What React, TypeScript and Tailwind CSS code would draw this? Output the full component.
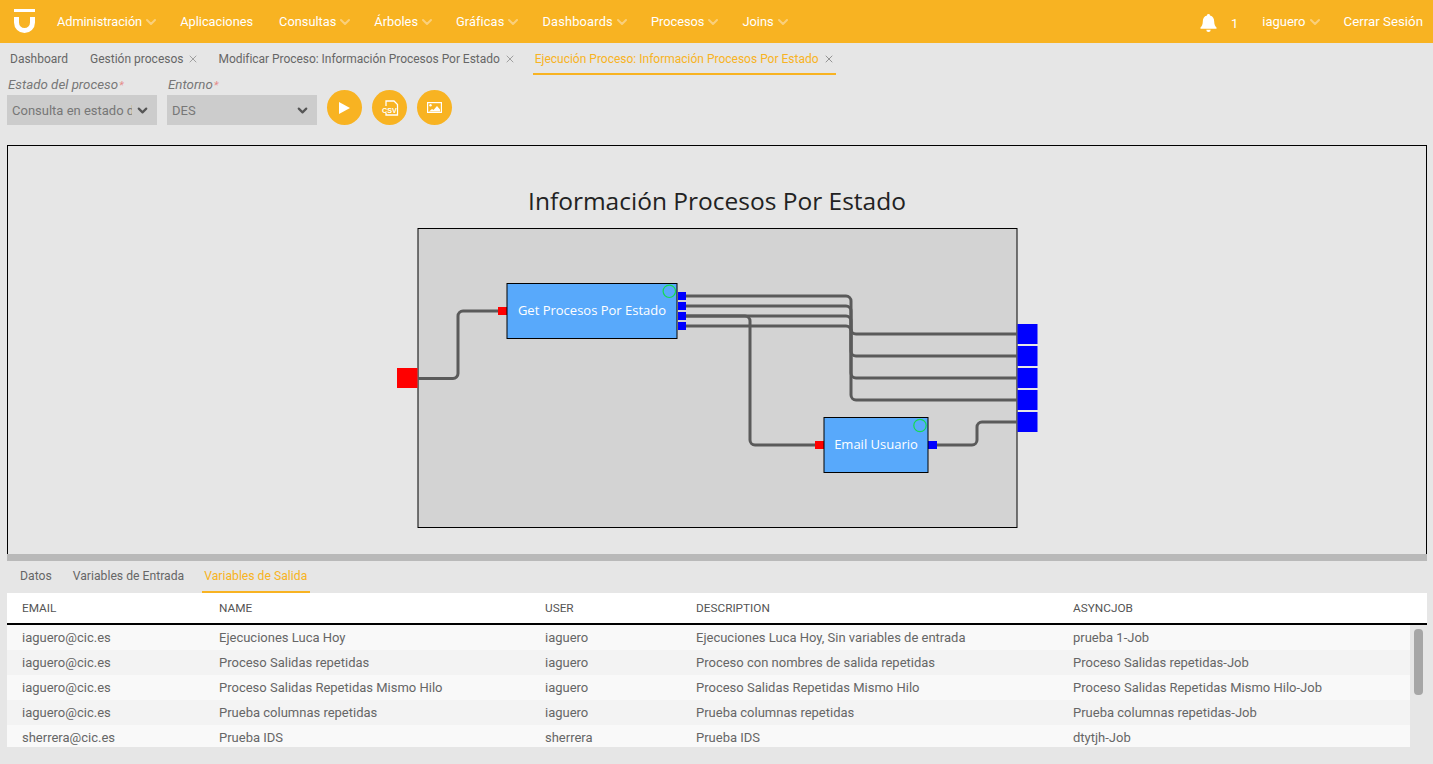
import { ChevronDown, X } from "lucide-react";

const navItems = [
  { label: "Administración", caret: true, cls: "tracking-[-0.07px]" },
  { label: "Aplicaciones", caret: false, cls: "" },
  { label: "Consultas", caret: true, cls: "" },
  { label: "Árboles", caret: true, cls: "" },
  { label: "Gráficas", caret: true, cls: "tracking-[0.1px]" },
  { label: "Dashboards", caret: true, cls: "tracking-[0.2px]" },
  { label: "Procesos", caret: true, cls: "" },
  { label: "Joins", caret: true, cls: "" },
];

const rows = [
  ["iaguero@cic.es", "Ejecuciones Luca Hoy", "iaguero", "Ejecuciones Luca Hoy, Sin variables de entrada", "prueba 1-Job"],
  ["iaguero@cic.es", "Proceso Salidas repetidas", "iaguero", "Proceso con nombres de salida repetidas", "Proceso Salidas repetidas-Job"],
  ["iaguero@cic.es", "Proceso Salidas Repetidas Mismo Hilo", "iaguero", "Proceso Salidas Repetidas Mismo Hilo", "Proceso Salidas Repetidas Mismo Hilo-Job"],
  ["iaguero@cic.es", "Prueba columnas repetidas", "iaguero", "Prueba columnas repetidas", "Prueba columnas repetidas-Job"],
  ["sherrera@cic.es", "Prueba IDS", "sherrera", "Prueba IDS", "dtytjh-Job"],
];

const Logo = () => (
  <svg width="21" height="24" viewBox="0 0 21 24" fill="none" className="ml-[14px] mr-[22px] mb-[1px]">
    <rect x="0" y="0" width="21" height="3" fill="#fff" />
    <path d="M2.5 8v5.5a8 8 0 0 0 16 0V8" stroke="#fff" strokeWidth="5" />
  </svg>
);

const Bell = () => (
  <svg width="17" height="18" viewBox="0 0 17 18" fill="#fff" className="mt-[3px]">
    <path d="M8.5 0a1.5 1.5 0 0 1 1.5 1.6c3 .7 4.2 3.1 4.2 6 0 3.2 1 4.6 2.3 6v1.2H.5v-1.2c1.3-1.4 2.3-2.8 2.3-6 0-2.9 1.2-5.3 4.2-6A1.5 1.5 0 0 1 8.5 0z" />
    <path d="M6.3 15.8h4.4a2.2 2.2 0 0 1-4.4 0z" />
  </svg>
);

const Caret = () => <ChevronDown size={16} strokeWidth={3} className="ml-[1px] -mr-[5px] text-[#fad07c]" />;

const Select = ({ label, value, clip }: { label: string; value: string; clip?: boolean }) => (
  <div className="w-[150px]">
    <div className="h-5 pl-[1px] text-[13.3px] leading-[19px] italic text-[#777]">
      {label}
      <span className="text-[#e58a8a] ml-[1px] text-[11px]">*</span>
    </div>
    <div className="h-[30px] bg-[#cccccc] flex items-center pl-[5px] pr-[7px] pt-[1px] text-[13px] text-[#777]">
      <span className={`overflow-hidden whitespace-nowrap ${clip ? "w-[120px]" : "flex-1"}`}>{value}</span>
      <ChevronDown size={15} strokeWidth={3.5} className="ml-auto text-[#555]" />
    </div>
  </div>
);

const RoundButton = ({ children }: { children: React.ReactNode }) => (
  <button className="w-[35px] h-[35px] rounded-full bg-[#f8b322] flex items-center justify-center">{children}</button>
);

// pintado con coordenadas de pagina, por eso el viewBox empieza en 8,146
const Diagram = () => {
  const wire = { fill: "none", stroke: "#5a5a5a", strokeWidth: 3 };
  return (
    <svg width="1418" height="408" viewBox="8 146 1418 408" className="block">
      <text x="717" y="210" textAnchor="middle" fontFamily="'Open Sans', sans-serif" fontSize="24.5" fill="#222">
        Información Procesos Por Estado
      </text>
      <rect x="418" y="228.5" width="599" height="299" fill="#d3d3d3" stroke="#000" />

      <path d="M418 378.5h35a5 5 0 0 0 5-5V316a5 5 0 0 1 5-5h36" {...wire} />
      <path d="M686 296h160a5 5 0 0 1 5 5v28a5 5 0 0 0 5 5h161" {...wire} />
      <path d="M686 306h160a5 5 0 0 1 5 5v40a5 5 0 0 0 5 5h161" {...wire} />
      <path d="M686 316h160a5 5 0 0 1 5 5v52a5 5 0 0 0 5 5h161" {...wire} />
      <path d="M686 326h160a5 5 0 0 1 5 5v64a5 5 0 0 0 5 5h161" {...wire} />
      <path d="M686 316h59a5 5 0 0 1 5 5v119a5 5 0 0 0 5 5h60" {...wire} />
      <path d="M937 445h35a5 5 0 0 0 5-5v-13a5 5 0 0 1 5-5h35" {...wire} />

      <rect x="397" y="368" width="20.5" height="20" fill="#ff0000" />
      {[324, 346, 368, 390, 412].map((y) => (
        <rect key={y} x="1017.5" y={y} width="20" height="20" fill="#0000ff" />
      ))}

      <rect x="498" y="307" width="9" height="8" fill="#ff0000" />
      {[292, 302, 312, 322].map((y) => (
        <rect key={y} x="678" y={y} width="8" height="8" fill="#0000ff" />
      ))}
      <rect x="507" y="283.5" width="170" height="55" fill="#58a9fb" stroke="#000" />
      <circle cx="669.3" cy="291.3" r="6.2" fill="none" stroke="#14dc50" strokeWidth="1.2" />
      <text x="592" y="315" textAnchor="middle" fontFamily="'Open Sans', sans-serif" fontSize="13" fill="#fff">
        Get Procesos Por Estado
      </text>

      <rect x="815" y="441" width="9" height="8" fill="#ff0000" />
      <rect x="928" y="441" width="9" height="8" fill="#0000ff" />
      <rect x="824" y="417.5" width="104" height="55" fill="#58a9fb" stroke="#000" />
      <circle cx="920" cy="425.5" r="6.2" fill="none" stroke="#14dc50" strokeWidth="1.2" />
      <text x="876" y="449" textAnchor="middle" fontFamily="'Open Sans', sans-serif" fontSize="13" fill="#fff">
        Email Usuario
      </text>
    </svg>
  );
};

const App = () => {
  return (
    <div className="w-[1433px] h-[764px] overflow-hidden bg-[#e6e6e6] font-['Roboto',sans-serif]">
      <header className="h-[43px] bg-[#f8b322] flex items-center text-white text-[12.8px]">
        <Logo />
        {navItems.map((n) => (
          <div key={n.label} className="flex items-center mr-[26px]">
            <span className={n.cls}>{n.label}</span>
            {n.caret && <Caret />}
          </div>
        ))}
        <div className="ml-auto flex items-center">
          <Bell />
          <span className="ml-[14px] mr-[24px] mt-[5px] text-[13px]">1</span>
          <span className="text-[13px]">iaguero</span>
          <div className="flex mr-[26px]">
            <Caret />
          </div>
          <span className="mr-[10px] text-[13.3px]">Cerrar Sesión</span>
        </div>
      </header>

      <nav className="h-[32px] flex items-start pl-[10px] text-[12px] text-[#666]">
        <div className="h-[32px] flex items-center mr-[22px]">Dashboard</div>
        <div className="h-[32px] flex items-center mr-[19px]">
          <span>Gestión procesos</span>
          <X size={12} strokeWidth={1.5} className="ml-[4px] text-[#888]" />
        </div>
        <div className="h-[32px] flex items-center mr-[17px]">
          <span className="tracking-[-0.04px]">Modificar Proceso: Información Procesos Por Estado</span>
          <X size={12} strokeWidth={1.5} className="ml-[4px] text-[#888]" />
        </div>
        <div className="h-[32px] pt-[1px] flex items-center pl-[2px] pr-[1px] text-[#f8b322] border-b-2 border-[#f8b322]">
          <span>Ejecución Proceso: Información Procesos Por Estado</span>
          <X size={12} strokeWidth={1.5} className="ml-[4px] text-[#777]" />
        </div>
      </nav>

      <section className="h-[70px] flex items-start pl-[7px] gap-[10px]">
        <Select label="Estado del proceso" value="Consulta en estado de" clip />
        <Select label="Entorno" value="DES" />
        <div className="flex gap-[10px] mt-[15px]">
          <RoundButton>
            <svg width="11" height="12" viewBox="0 0 11 12" fill="#fff">
              <path d="M0 0l11 6L0 12z" />
            </svg>
          </RoundButton>
          <RoundButton>
            <svg width="35" height="35" viewBox="0 0 35 35" fill="none">
              <path d="M14 16v-5h8l3.5 3.5V25H14v-3" stroke="#fff" strokeWidth="1.3" />
              <rect x="9.5" y="16.5" width="15" height="6.5" fill="#f8b322" />
              <text x="10" y="22.5" fontFamily="'Liberation Sans', sans-serif" fontWeight="700" fontSize="7.2" fill="#fff">
                CSV
              </text>
            </svg>
          </RoundButton>
          <RoundButton>
            <svg width="15" height="11" viewBox="0 0 15 11" fill="none">
              <rect x="0.6" y="0.6" width="13.8" height="9.8" stroke="#fff" strokeWidth="1.2" />
              <circle cx="3.5" cy="3.3" r="1.2" fill="#fff" />
              <path d="M2 9.5l3-2.5 1.5 1 3.5-4 3 3.5v2z" fill="#fff" />
            </svg>
          </RoundButton>
        </div>
      </section>

      <section className="ml-[7px] w-[1420px] h-[409px] border border-b-0 border-black">
        <Diagram />
      </section>

      <div className="ml-[7px] w-[1420px] h-[7px] bg-[#b9b9b9]" />

      <nav className="h-[32px] pl-[20px] flex text-[12.2px] text-[#666]">
        <div className="h-[32px] pb-[2px] flex items-center mr-[21px]">Datos</div>
        <div className="h-[32px] pb-[2px] flex items-center mr-[18px]">Variables de Entrada</div>
        <div className="h-[32px] flex items-center pl-[2px] pr-[3px] text-[#f8b322] border-b-2 border-[#f8b322]">
          Variables de Salida
        </div>
      </nav>

      <section className="ml-[7px] w-[1420px] relative">
        <div className="h-[32px] pt-[2px] bg-white border-b-2 border-black grid grid-cols-[197px_326px_151px_377px_1fr] pl-[15px] items-center text-[11.8px] text-[#555]">
          <div>EMAIL</div>
          <div>NAME</div>
          <div>USER</div>
          <div>DESCRIPTION</div>
          <div>ASYNCJOB</div>
        </div>
        <div className="w-[1403px] h-[122px] overflow-hidden">
          {rows.map((r, i) => (
            <div
              key={i}
              className={`h-[25px] pt-[1px] grid grid-cols-[197px_326px_151px_377px_1fr] pl-[15px] items-center text-[13px] text-[#666] ${
                i % 2 === 0 ? "bg-[#f9f9f9]" : "bg-[#f3f3f3]"
              }`}
            >
              {r.map((c, j) => (
                <div key={j}>{c}</div>
              ))}
            </div>
          ))}
        </div>
        <div className="absolute left-[1407px] top-[36px] w-[9px] h-[66px] rounded-[4px] bg-[#a6a6a6]" />
      </section>
    </div>
  );
};

export default App;
